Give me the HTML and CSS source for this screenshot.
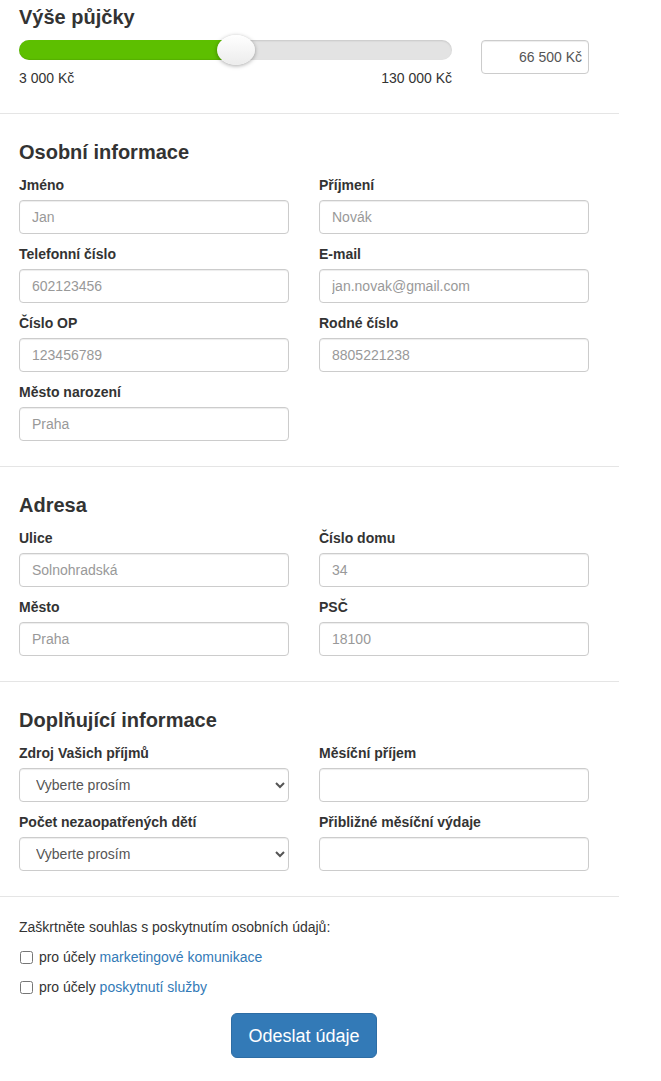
FILE: index.html
```html
<!DOCTYPE html>
<html lang="cs">
<head>
<meta charset="utf-8">
<title>Žádost o půjčku</title>
<link rel="stylesheet" href="styles.css">
</head>
<body>
<form class="page">
  <section class="sec sec-loan">
    <h3 class="title">Výše půjčky</h3>
    <div class="loan-row">
      <div class="slider-wrap">
        <div class="track">
          <div class="fill" style="width:50%"></div>
          <div class="thumb" style="left:50%"></div>
        </div>
        <div class="range-labels"><span>3 000 Kč</span><span>130 000 Kč</span></div>
      </div>
      <input class="ctrl amount" type="text" value="66 500 Kč">
    </div>
  </section>

  <section class="sec">
    <h3 class="title">Osobní informace</h3>
    <div class="grid">
      <div class="field"><label>Jméno</label><input class="ctrl" type="text" placeholder="Jan"></div>
      <div class="field"><label>Příjmení</label><input class="ctrl" type="text" placeholder="Novák"></div>
      <div class="field"><label>Telefonní číslo</label><input class="ctrl" type="text" placeholder="602123456"></div>
      <div class="field"><label>E-mail</label><input class="ctrl" type="text" placeholder="jan.novak@gmail.com"></div>
      <div class="field"><label>Číslo OP</label><input class="ctrl" type="text" placeholder="123456789"></div>
      <div class="field"><label>Rodné číslo</label><input class="ctrl" type="text" placeholder="8805221238"></div>
      <div class="field"><label>Město narození</label><input class="ctrl" type="text" placeholder="Praha"></div>
    </div>
  </section>

  <section class="sec">
    <h3 class="title">Adresa</h3>
    <div class="grid">
      <div class="field"><label>Ulice</label><input class="ctrl" type="text" placeholder="Solnohradská"></div>
      <div class="field"><label>Číslo domu</label><input class="ctrl" type="text" placeholder="34"></div>
      <div class="field"><label>Město</label><input class="ctrl" type="text" placeholder="Praha"></div>
      <div class="field"><label>PSČ</label><input class="ctrl" type="text" placeholder="18100"></div>
    </div>
  </section>

  <section class="sec">
    <h3 class="title">Doplňující informace</h3>
    <div class="grid">
      <div class="field"><label>Zdroj Vašich příjmů</label><select class="ctrl sel"><option>Vyberte prosím</option></select></div>
      <div class="field"><label>Měsíční příjem</label><input class="ctrl" type="text"></div>
      <div class="field"><label>Počet nezaopatřených dětí</label><select class="ctrl sel"><option>Vyberte prosím</option></select></div>
      <div class="field"><label>Přibližné měsíční výdaje</label><input class="ctrl" type="text"></div>
    </div>
  </section>

  <section class="sec sec-consent">
    <p class="consent">Zaškrtněte souhlas s poskytnutím osobních údajů:</p>
    <label class="check"><input type="checkbox"> pro účely <a href="#">marketingové komunikace</a></label>
    <label class="check"><input type="checkbox"> pro účely <a href="#">poskytnutí služby</a></label>
    <div class="actions"><button type="button" class="btn">Odeslat údaje</button></div>
  </section>
</form>
</body>
</html>
```

FILE: styles.css
```css
* { box-sizing: border-box; }
html, body { margin: 0; padding: 0; background: #fff; }
body {
  font-family: "Liberation Sans", Arial, Helvetica, sans-serif;
  font-size: 14px;
  line-height: 20px;
  color: #333;
}
.page { width: 619px; }
.sec {
  padding: 27px 30px 15px 19px;
  border-bottom: 1px solid #e5e5e5;
}
.title {
  margin: 0 0 12px;
  font-size: 20px;
  line-height: 22px;
  font-weight: bold;
  color: #333;
}
.sec-loan { padding-top: 6px; padding-bottom: 25px; }
.sec-loan .title { margin-bottom: 12px; }
.loan-row {
  display: flex;
  align-items: flex-start;
  gap: 29px;
}
.slider-wrap { width: 433px; }
.track {
  position: relative;
  height: 20px;
  border-radius: 10px;
  background: #e3e3e3;
  box-shadow: inset 0 1px 2px rgba(0,0,0,0.12);
}
.fill {
  height: 20px;
  border-radius: 10px 0 0 10px;
  background: #5dbf00;
  box-shadow: inset 0 -1px 1px rgba(0,0,0,0.08);
}
.thumb {
  position: absolute;
  top: -5px;
  width: 38px;
  height: 30px;
  margin-left: -19px;
  border-radius: 50%;
  background: linear-gradient(#ffffff, #ececec);
  box-shadow: 0 1px 4px rgba(0,0,0,0.35);
}
.range-labels {
  display: flex;
  justify-content: space-between;
  margin-top: 8px;
  font-size: 14px;
  line-height: 20px;
}
.grid {
  display: grid;
  grid-template-columns: 270px 270px;
  column-gap: 30px;
}
.field { display: flex; flex-direction: column; margin-bottom: 10px; }
.field label {
  font-weight: bold;
  line-height: 20px;
  margin-bottom: 5px;
}
.ctrl {
  display: block;
  width: 100%;
  height: 34px;
  padding: 6px 12px;
  font-family: inherit;
  font-size: 14px;
  line-height: 20px;
  color: #555;
  background: #fff;
  border: 1px solid #ccc;
  border-radius: 4px;
  box-shadow: inset 0 1px 1px rgba(0,0,0,0.075);
}
.ctrl::placeholder { color: #999; }
.amount {
  width: 108px;
  text-align: right;
  padding-right: 6px;
  color: #555;
}
.sel { padding: 6px 12px; }
.sec-consent { padding-top: 20px; border-bottom: none; }
.consent { margin: 0 0 10px; }
.check {
  display: flex;
  align-items: center;
  height: 20px;
  margin-bottom: 10px;
  white-space: pre;
}
.check input {
  margin: 0 2px 0 1px;
  width: 13px;
  height: 13px;
}
.check a { color: #337ab7; text-decoration: none; }
.actions {
  display: flex;
  justify-content: center;
  padding-top: 6px;
  width: 570px;
}
.btn {
  width: 146px;
  height: 45px;
  border: 1px solid #2e6da4;
  border-radius: 6px;
  background: #337ab7;
  color: #fff;
  font-family: inherit;
  font-size: 18px;
  line-height: 24px;
  padding: 10px 16px;
}
```
